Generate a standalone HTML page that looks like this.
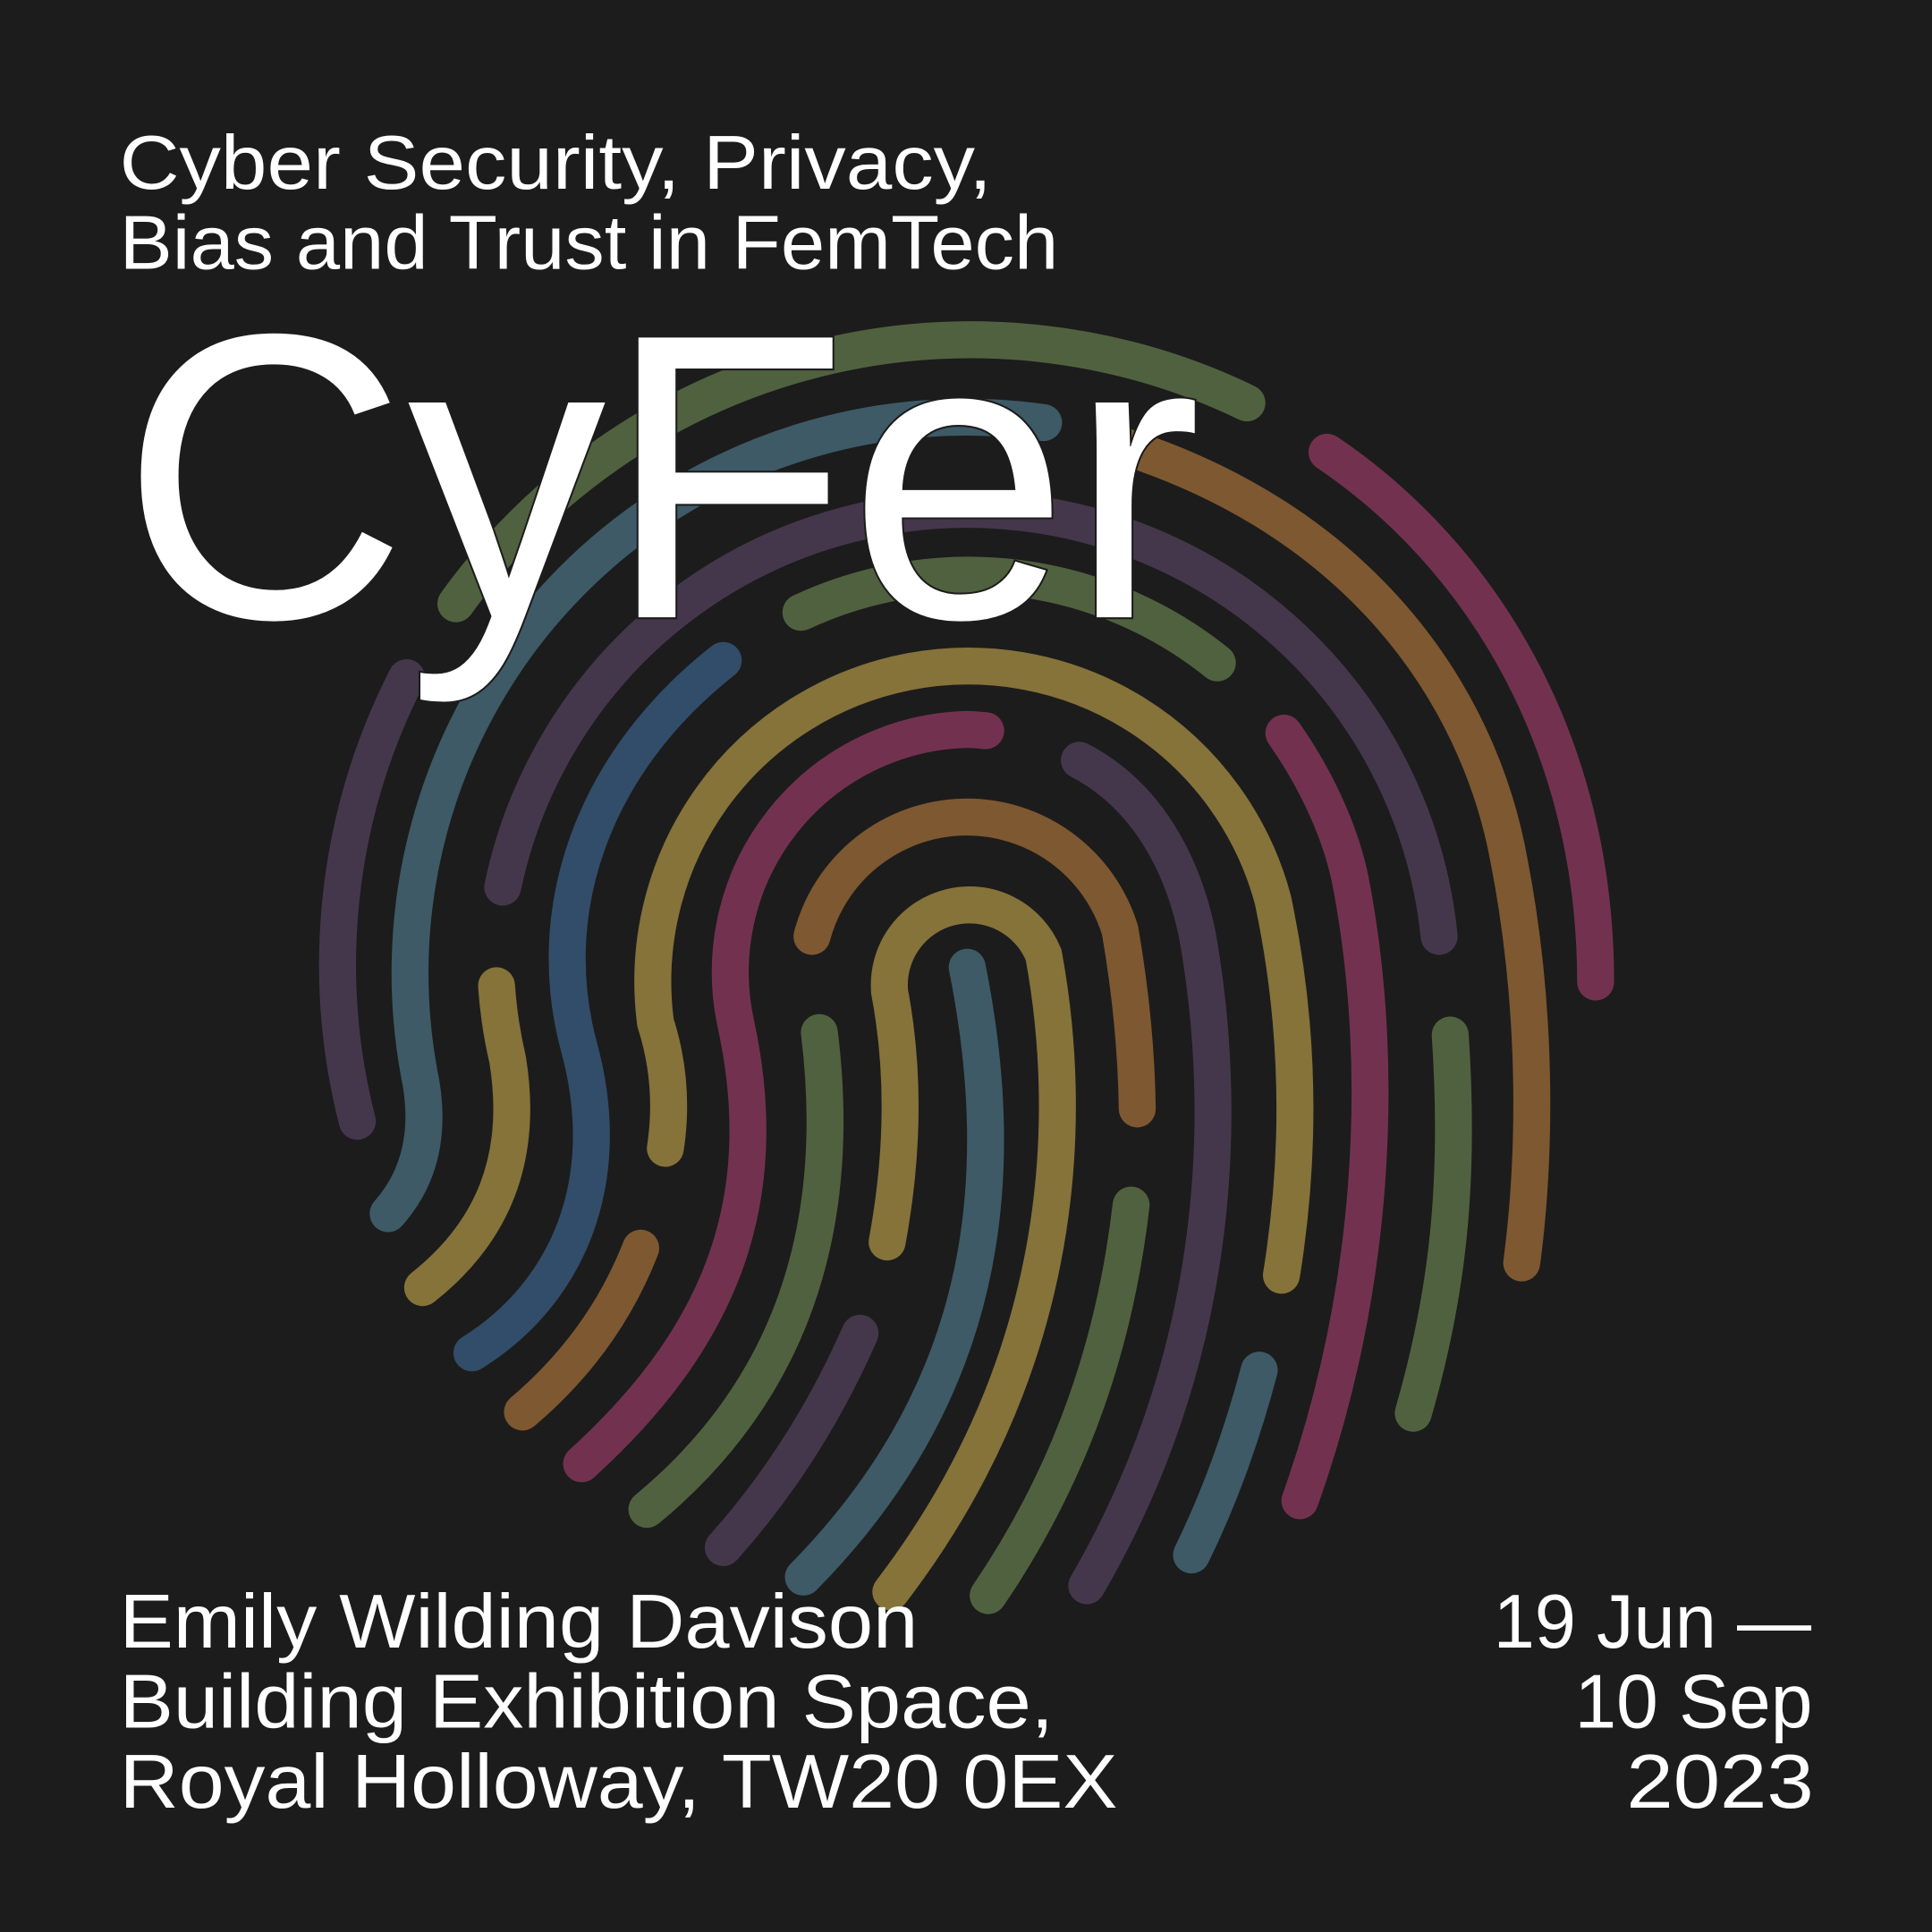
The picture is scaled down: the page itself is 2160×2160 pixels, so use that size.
<!DOCTYPE html>
<html><head><meta charset="utf-8"><style>
html,body{margin:0;padding:0;background:#1c1c1c;}
svg{display:block}
text{font-family:"Liberation Sans",sans-serif;fill:#fff}
</style></head><body>
<svg width="2160" height="2160" viewBox="0 0 1568 1568" xmlns="http://www.w3.org/2000/svg">
<rect width="1568" height="1568" fill="#1c1c1c"/>
<g fill="none" stroke-width="30" stroke-linecap="round">
<path d="M370,490 A515 515 0 0 1 1012,327" stroke="#50613f"/>
<path d="M847,343 A451 451 0 0 0 340,870 Q355,940 315,985" stroke="#3d5a66"/>
<path d="M330,550 A512 512 0 0 0 290,910" stroke="#45374b"/>
<path d="M408,720 A385 385 0 0 1 1168,760" stroke="#45374b"/>
<path d="M905,360 C1100,420 1200,560 1225,700 C1250,830 1245,950 1235,1025" stroke="#7e5830"/>
<path d="M1077,367 C1200,450 1295,600 1295,797" stroke="#72324f"/>
<path d="M650,497 A322 322 0 0 1 988,538" stroke="#50613f"/>
<path d="M587,536 C480,620 440,740 470,850 C500,960 460,1050 383,1098" stroke="#324d69"/>
<path d="M540,932 Q548,880 532,830 A256 256 0 0 1 1033,730 Q1065,880 1040,1035" stroke="#86733a"/>
<path d="M800,593 Q790,592 785,592 A197 197 0 0 0 597,830 C630,980 580,1090 472,1188" stroke="#72324f"/>
<path d="M659,760 A130 130 0 0 1 909,755 Q922,830 923,900" stroke="#7e5830"/>
<path d="M720,1008 Q740,900 722,805 A65 65 0 0 1 847,775 C870,900 870,1100 723,1292" stroke="#86733a"/>
<path d="M785,785 C820,960 800,1130 652,1280" stroke="#3d5a66"/>
<path d="M876,617 C930,645 960,700 972,760 C1000,920 985,1110 882,1287" stroke="#45374b"/>
<path d="M1042,595 C1070,635 1090,680 1097,720 C1125,870 1115,1050 1055,1218" stroke="#72324f"/>
<path d="M1177,840 C1185,960 1175,1050 1147,1147" stroke="#50613f"/>
<path d="M1022,1112 Q1000,1195 967,1262" stroke="#3d5a66"/>
<path d="M918,978 C905,1090 870,1195 802,1295" stroke="#50613f"/>
<path d="M665,838 C685,1000 640,1130 525,1225" stroke="#50613f"/>
<path d="M698,1082 Q655,1180 587,1256" stroke="#45374b"/>
<path d="M520,1013 Q490,1090 424,1146" stroke="#7e5830"/>
<path d="M403,800 Q405,830 412,860 C425,940 400,1000 343,1045" stroke="#86733a"/>
</g>
<text x="97" y="153" font-size="62" textLength="708" lengthAdjust="spacingAndGlyphs">Cyber Security, Privacy,</text>
<text x="97" y="218" font-size="62" textLength="762" lengthAdjust="spacingAndGlyphs">Bias and Trust in FemTech</text>
<text x="98" y="501" font-size="330" textLength="877" lengthAdjust="spacingAndGlyphs" stroke="#1c1c1c" stroke-width="3" paint-order="stroke">CyFer</text>
<text x="97" y="1337" font-size="62" textLength="648" lengthAdjust="spacingAndGlyphs">Emily Wilding Davison</text>
<text x="97" y="1402" font-size="62" textLength="758" lengthAdjust="spacingAndGlyphs">Building Exhibition Space,</text>
<text x="97" y="1467" font-size="62" textLength="810" lengthAdjust="spacingAndGlyphs">Royal Holloway, TW20 0EX</text>
<text x="1212" y="1337" font-size="62" textLength="258" lengthAdjust="spacingAndGlyphs">19 Jun —</text>
<text x="1278" y="1402" font-size="62" textLength="193" lengthAdjust="spacingAndGlyphs">10 Sep</text>
<text x="1320" y="1467" font-size="62" textLength="152" lengthAdjust="spacingAndGlyphs">2023</text>
</svg>
</body></html>
